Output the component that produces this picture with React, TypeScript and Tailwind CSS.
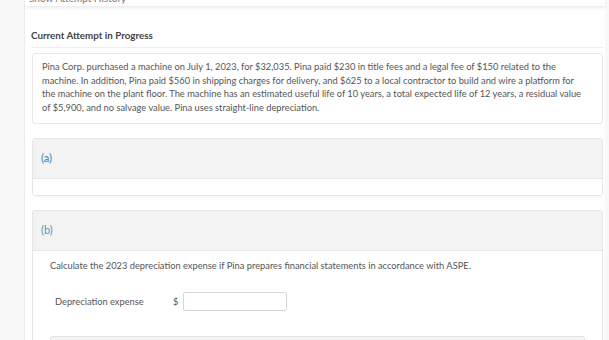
export default function App() {
    return (
        <div className="w-[609px] h-[340px] overflow-hidden bg-[#f8f8f8] font-['Lato',sans-serif] text-[#555]">
            <div className="ml-[24px] mr-[4px] h-full bg-white border-l border-[#ececec]">
                {/* sticky bar, mostly scrolled away */}
                <div className="h-[6px] overflow-hidden bg-white shadow-[0_2px_3px_rgba(0,0,0,0.08)] pl-[4px]">
                    <p className="-mt-[8px] text-[10px] leading-[12px] text-[#777]">
                        Show Attempt History
                    </p>
                </div>

                <div className="pl-[6px] pr-[2px]">
                    <h2 className="pt-[23px] pb-[6px] border-b border-[#eeeeee] text-[9.8px] leading-[12px] font-bold text-[#444]">
                        Current Attempt in Progress
                    </h2>

                    <div className="ml-[1px] mt-[5px] h-[71px] border border-[#e8e8e8] rounded-[3px] bg-white px-[9px] pt-[6px] text-[9.3px] leading-[13.5px] text-[#555] whitespace-nowrap">
                        <p>
                            Pina Corp. purchased a machine on July 1, 2023, for $32,035. Pina paid $230 in title fees and a legal fee of $150 related to the
                        </p>
                        <p>
                            machine. In addition, Pina paid $560 in shipping charges for delivery, and $625 to a local contractor to build and wire a platform for
                        </p>
                        <p>
                            the machine on the plant floor. The machine has an estimated useful life of 10 years, a total expected life of 12 years, a residual value
                        </p>
                        <p>of $5,900, and no salvage value. Pina uses straight-line depreciation.</p>
                    </div>

                    <div className="ml-[1px] mt-[14px] rounded-[3px] border border-[#e6e6e6] shadow-[0_1px_2px_rgba(0,0,0,0.04)]">
                        <div className="h-[40px] flex items-center px-[8px] bg-[#f3f3f3] border-b border-[#e6e6e6]">
                            <span className="text-[11px] font-semibold text-[#4f97c0]">(a)</span>
                        </div>
                        <div className="h-[16px] bg-white" />
                    </div>

                    <div className="ml-[1px] mt-[14px] rounded-t-[3px] border border-b-0 border-[#e6e6e6]">
                        <div className="h-[40px] flex items-center px-[8px] bg-[#f3f3f3] border-b border-[#e6e6e6]">
                            <span className="text-[11px] text-[#4f97c0]">(b)</span>
                        </div>
                        <div className="bg-white pl-[17px] pr-[17px] pt-[9px]">
                            <p className="text-[9.3px] leading-[12px] text-[#555]">
                                Calculate the 2023 depreciation expense if Pina prepares financial statements in accordance with ASPE.
                            </p>
                            <div className="mt-[20px] ml-[5px] flex items-center">
                                <span className="w-[118px] text-[9.3px] text-[#555]">Depreciation expense</span>
                                <span className="text-[9.3px] text-[#555]">$</span>
                                <input
                                    type="text"
                                    className="ml-[5px] w-[104px] h-[19px] border border-[#d6d6d6] rounded-[2px] bg-white outline-none"
                                />
                            </div>
                            <div className="mt-[25px] h-[30px] rounded-[3px] border border-[#e2e2e2] bg-[#f4f4f4]" />
                        </div>
                    </div>
                </div>
            </div>
        </div>
    );
}
